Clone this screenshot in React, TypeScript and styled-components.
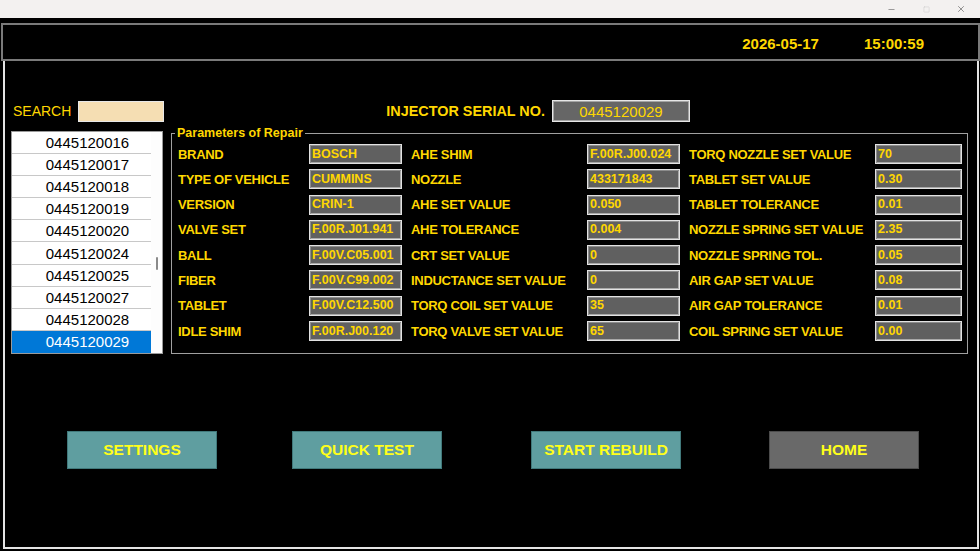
import { Fragment } from 'react'
import styled, { createGlobalStyle } from 'styled-components'
import { Minus, Square, X } from 'lucide-react'

const GlobalStyle = createGlobalStyle`
  html, body {
    margin: 0;
    padding: 0;
    background: #000;
    font-family: 'Liberation Sans', Arial, sans-serif;
  }
  * {
    box-sizing: border-box;
  }
`

const Window = styled.div`
  width: 980px;
  height: 551px;
  background: #000;
  display: flex;
  flex-direction: column;
  overflow: hidden;
`

const TitleBar = styled.div`
  height: 18px;
  background: #f3f1f0;
  display: flex;
  justify-content: flex-end;
  align-items: center;
  padding-right: 14px;
  gap: 25px;
`

const WinButton = styled.span<{ $dim?: boolean }>`
  width: 10px;
  display: flex;
  justify-content: center;
  color: ${({ $dim }) => ($dim ? '#c4c4c4' : '#4a4a4a')};
`

const Header = styled.div`
  margin: 5px 0 0 1px;
  height: 38px;
  border: 2px solid #7a7a7a;
  display: flex;
  justify-content: flex-end;
  align-items: center;
  padding: 2px 54px 0 0;
  gap: 45px;
`

const Clock = styled.span`
  color: #ffd700;
  font-size: 15px;
  font-weight: bold;
`

const MainPanel = styled.div`
  flex: 1;
  margin: 0 1px 2px 3px;
  border: 2px solid #e4e4e4;
  border-top: none;
  display: flex;
  flex-direction: column;
`

const TopRow = styled.div`
  margin-top: 39px;
  padding-left: 8px;
  height: 22px;
  display: flex;
  align-items: center;
`

const SearchLabel = styled.span`
  color: #ffd700;
  font-size: 14px;
  margin-right: 7px;
`

const SearchInput = styled.input`
  width: 86px;
  height: 21px;
  background: #f5deb3;
  border: 1px solid #e8e8e8;
  outline: none;
  padding: 0 3px;
`

const SerialLabel = styled.span`
  margin-left: 222px;
  color: #ffd700;
  font-size: 14.4px;
  font-weight: bold;
  margin-right: 7px;
`

const SerialBox = styled.div`
  width: 138px;
  height: 22px;
  background: #666;
  border: 1px solid #e6e6e6;
  box-shadow: inset 0 0 0 1px #a4a4a4;
  color: #ffd700;
  font-size: 15px;
  display: flex;
  align-items: center;
  justify-content: center;
`

const BodyRow = styled.div`
  margin-top: 4px;
  padding-left: 6px;
  display: flex;
  align-items: flex-start;
  gap: 8px;
`

const List = styled.div`
  margin-top: 5px;
  width: 152px;
  border: 1px solid #9a9a9a;
  background: #fff;
  display: flex;
`

const Items = styled.div`
  width: 139px;
  display: flex;
  flex-direction: column;
`

const Item = styled.div<{ $selected?: boolean }>`
  height: 22.1px;
  border-bottom: 1px solid ${({ $selected }) => ($selected ? '#0078d7' : '#c8c8c8')};
  background: ${({ $selected }) => ($selected ? '#0078d7' : '#fff')};
  color: ${({ $selected }) => ($selected ? '#fff' : '#000')};
  font-size: 15px;
  display: flex;
  align-items: center;
  justify-content: center;
  padding-left: 12px;
`

const ScrollTrack = styled.div`
  width: 11px;
  padding-top: 125px;
  display: flex;
  justify-content: center;
  background: #fdfdfd;
`

const ScrollThumb = styled.div`
  width: 2px;
  height: 13px;
  background: #8a8a8a;
  border-radius: 1px;
`

const GroupBox = styled.fieldset`
  margin: 0;
  width: 797px;
  border: 1px solid #a0a0a0;
  padding: 4px 5px 12px 6px;
`

const Legend = styled.legend`
  color: #ffd700;
  font-size: 12.5px;
  font-weight: bold;
  padding: 0 2px;
  margin-left: -3px;
  line-height: 14px;
`

const ParamGrid = styled.div`
  display: grid;
  grid-template-columns: 131px 93px 185px 93px 195px 87px;
  grid-auto-rows: 20px;
  row-gap: 5.3px;
`

const ParamLabel = styled.span<{ $indent?: boolean }>`
  color: #ffd700;
  font-size: 13px;
  font-weight: bold;
  letter-spacing: -0.3px;
  display: flex;
  align-items: center;
  white-space: nowrap;
  padding-left: ${({ $indent }) => ($indent ? '9px' : '0')};
`

const ParamValue = styled.div`
  background: #606060;
  border: 1px solid #e2e2e2;
  box-shadow: inset 1px 1px 0 #8c8c8c, inset -1px -1px 0 #a8a8a8;
  color: #ffd700;
  font-size: 12.5px;
  font-weight: bold;
  display: flex;
  align-items: center;
  padding: 0 0 1px 2px;
  white-space: nowrap;
  overflow: hidden;
`

const ButtonRow = styled.div`
  margin-top: 77px;
  padding-left: 62px;
  display: grid;
  grid-template-columns: 225px 239px 238px 150px;
`

const ActionButton = styled.button<{ $gray?: boolean }>`
  width: 150px;
  height: 38px;
  background: ${({ $gray }) => ($gray ? '#696969' : '#5f9ea0')};
  border: 1px solid ${({ $gray }) => ($gray ? '#4c4c4c' : '#41797b')};
  color: #ffff1a;
  font-family: 'Liberation Sans', Arial, sans-serif;
  font-size: 15.5px;
  font-weight: bold;
  cursor: pointer;
  padding: 0;
`

const serials = [
  '0445120016',
  '0445120017',
  '0445120018',
  '0445120019',
  '0445120020',
  '0445120024',
  '0445120025',
  '0445120027',
  '0445120028',
  '0445120029',
]

const params: [string, string, string, string, string, string][] = [
  ['BRAND', 'BOSCH', 'AHE SHIM', 'F.00R.J00.024', 'TORQ NOZZLE SET VALUE', '70'],
  ['TYPE OF VEHICLE', 'CUMMINS', 'NOZZLE', '433171843', 'TABLET SET VALUE', '0.30'],
  ['VERSION', 'CRIN-1', 'AHE SET VALUE', '0.050', 'TABLET TOLERANCE', '0.01'],
  ['VALVE SET', 'F.00R.J01.941', 'AHE TOLERANCE', '0.004', 'NOZZLE SPRING SET VALUE', '2.35'],
  ['BALL', 'F.00V.C05.001', 'CRT SET VALUE', '0', 'NOZZLE SPRING TOL.', '0.05'],
  ['FIBER', 'F.00V.C99.002', 'INDUCTANCE SET VALUE', '0', 'AIR GAP SET VALUE', '0.08'],
  ['TABLET', 'F.00V.C12.500', 'TORQ COIL SET VALUE', '35', 'AIR GAP TOLERANCE', '0.01'],
  ['IDLE SHIM', 'F.00R.J00.120', 'TORQ VALVE SET VALUE', '65', 'COIL SPRING SET VALUE', '0.00'],
]

const App = () => {
  const selected = '0445120029'

  return (
    <Window>
      <GlobalStyle />
      <TitleBar>
        <WinButton>
          <Minus size={9} strokeWidth={1.4} />
        </WinButton>
        <WinButton $dim>
          <Square size={7} strokeWidth={1.4} />
        </WinButton>
        <WinButton>
          <X size={10} strokeWidth={1.4} />
        </WinButton>
      </TitleBar>

      <Header>
        <Clock>2026-05-17</Clock>
        <Clock>15:00:59</Clock>
      </Header>

      <MainPanel>
        <TopRow>
          <SearchLabel>SEARCH</SearchLabel>
          <SearchInput />
          <SerialLabel>INJECTOR SERIAL NO.</SerialLabel>
          <SerialBox>{selected}</SerialBox>
        </TopRow>

        <BodyRow>
          <List>
            <Items>
              {serials.map((s) => (
                <Item key={s} $selected={s === selected}>
                  {s}
                </Item>
              ))}
            </Items>
            <ScrollTrack>
              <ScrollThumb />
            </ScrollTrack>
          </List>

          <GroupBox>
            <Legend>Parameters of Repair</Legend>
            <ParamGrid>
              {params.map((row) => (
                <Fragment key={row[0]}>
                  <ParamLabel>{row[0]}</ParamLabel>
                  <ParamValue>{row[1]}</ParamValue>
                  <ParamLabel $indent>{row[2]}</ParamLabel>
                  <ParamValue>{row[3]}</ParamValue>
                  <ParamLabel $indent>{row[4]}</ParamLabel>
                  <ParamValue>{row[5]}</ParamValue>
                </Fragment>
              ))}
            </ParamGrid>
          </GroupBox>
        </BodyRow>

        <ButtonRow>
          <ActionButton type='button'>SETTINGS</ActionButton>
          <ActionButton type='button'>QUICK TEST</ActionButton>
          <ActionButton type='button'>START REBUILD</ActionButton>
          <ActionButton type='button' $gray>
            HOME
          </ActionButton>
        </ButtonRow>
      </MainPanel>
    </Window>
  )
}

export default App
